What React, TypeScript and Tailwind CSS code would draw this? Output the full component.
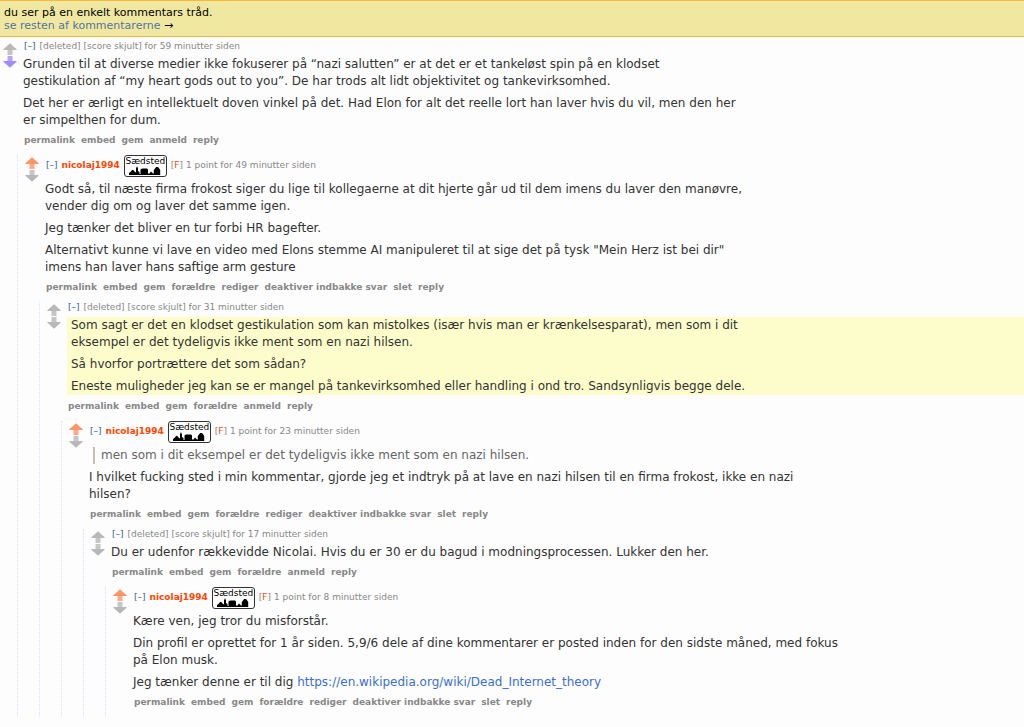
import type { ReactNode } from "react";

const OTHER_ACTIONS = ["permalink", "embed", "gem", "forældre", "anmeld", "reply"];
const OWN_ACTIONS = [
  "permalink",
  "embed",
  "gem",
  "forældre",
  "rediger",
  "deaktiver indbakke svar",
  "slet",
  "reply",
];

function Arrow(props: { label: string; className: string; down?: boolean }) {
  return (
    <button type="button" aria-label={props.label} className={props.className}>
      <svg
        viewBox="0 0 14 12"
        className={props.down ? "block h-3 w-3.5 rotate-180" : "block h-3 w-3.5"}
        fill="currentColor"
      >
        <path d="M7 0.2 L13.6 6.2 V7 H0.4 V6.2 Z" />
        <path d="M4.5 7 H9.5 V12 H4.5 Z" fillOpacity="0.8" />
      </svg>
    </button>
  );
}

function Stamp() {
  return (
    <span className="flex h-[22px] w-[43px] shrink-0 flex-col items-center justify-between overflow-hidden rounded-[3px] border border-[#333] bg-white pb-px text-[9px] leading-[10px] text-black">
      Sædsted
      <svg viewBox="0 0 32 9" className="block h-[9px] w-8 shrink-0" fill="#000">
        <path d="M0 9 V7 L2 5.5 L3.2 3.8 L5 4.5 L6 6.2 H7 V2.5 L8 0 L9 2.5 V5 L10.5 6 V8 H11.5 V3.5 L13 2.5 H18 L19 3.5 V7.5 H20.5 L22 5.5 L24 7.5 H24.8 V4 L26 2.5 L27.2 1 H29 L30.2 2.5 L31.2 4 V9 Z" />
      </svg>
    </span>
  );
}

function Comment(props: {
  author?: string;
  meta: string;
  actions: string[];
  vote?: "up" | "down";
  highlighted?: boolean;
  body: ReactNode;
  children?: ReactNode;
}) {
  return (
    <article>
      <div className="flex">
        <div className="flex w-[23px] shrink-0 flex-col pt-0.5 pl-[3px]">
          <Arrow
            label="stem op"
            className={props.vote === "up" ? "w-3.5 text-[#ff9466]" : "w-3.5 text-[#b8b8b8]"}
          />
          <Arrow
            label="stem ned"
            down
            className={
              props.vote === "down" ? "mt-px w-3.5 text-[#a08cff]" : "mt-px w-3.5 text-[#b8b8b8]"
            }
          />
        </div>
        <div className="min-w-0 flex-1">
          {props.author ? (
            <div className="mb-1 flex h-[22px] items-center gap-1 pl-px text-[9px] text-[#888]">
              <button type="button" className="text-[#369]">[–]</button>
              <a href="#" className="font-bold text-[#ff4500]">{props.author}</a>
              <Stamp />
              <span>
                [<a href="#" className="text-[#ff4500]">F</a>] {props.meta}
              </span>
            </div>
          ) : (
            <div className="mb-[3px] flex h-3 items-center gap-1 pl-px text-[9px] text-[#888]">
              <button type="button" className="text-[#369]">[–]</button>
              <span>[deleted] {props.meta}</span>
            </div>
          )}
          <div className={props.highlighted ? "bg-[#fdfdcc] pl-1" : ""}>
            <div className="flex max-w-[716px] flex-col gap-[5px] text-[12px] leading-[17px] text-[#333]">
              {props.body}
            </div>
          </div>
          <ul className="flex gap-1.5 pt-1 pb-2 pl-px text-[9px] leading-[14px] font-bold text-[#888]">
            {props.actions.map((action) => (
              <li key={action}>
                <a href="#">{action}</a>
              </li>
            ))}
          </ul>
        </div>
      </div>
      {props.children ? (
        <div className="ml-[17px] border-l border-dotted border-[#ddf] pl-1">{props.children}</div>
      ) : null}
    </article>
  );
}

export default function App() {
  return (
    <main className="min-h-screen bg-[#fdfdfd] font-['DejaVu_Sans',sans-serif]">
      <div className="mb-1 border-y border-[#fbb740] bg-[#f0e8a0] px-1 pt-[5px] pb-1 text-[11px] leading-[13px] text-black">
        <p>du ser på en enkelt kommentars tråd.</p>
        <p>
          <a href="#" className="text-[#5374a0]">se resten af kommentarerne</a> →
        </p>
      </div>
      <Comment
        meta="[score skjult] for 59 minutter siden"
        vote="down"
        actions={OTHER_ACTIONS.filter((action) => action !== "forældre")}
        body={
          <>
            <p>
              Grunden til at diverse medier ikke fokuserer på “nazi salutten” er at det er et
              tankeløst spin på en klodset gestikulation af “my heart gods out to you”. De har trods
              alt lidt objektivitet og tankevirksomhed.
            </p>
            <p>
              Det her er ærligt en intellektuelt doven vinkel på det. Had Elon for alt det reelle
              lort han laver hvis du vil, men den her er simpelthen for dum.
            </p>
          </>
        }
      >
        <Comment
          author="nicolaj1994"
          meta="1 point for 49 minutter siden"
          vote="up"
          actions={OWN_ACTIONS}
          body={
            <>
              <p>
                Godt så, til næste firma frokost siger du lige til kollegaerne at dit hjerte går ud
                til dem imens du laver den manøvre, vender dig om og laver det samme igen.
              </p>
              <p>Jeg tænker det bliver en tur forbi HR bagefter.</p>
              <p>
                Alternativt kunne vi lave en video med Elons stemme AI manipuleret til at sige det
                på tysk "Mein Herz ist bei dir" imens han laver hans saftige arm gesture
              </p>
            </>
          }
        >
          <Comment
            meta="[score skjult] for 31 minutter siden"
            highlighted
            actions={OTHER_ACTIONS}
            body={
              <>
                <p>
                  Som sagt er det en klodset gestikulation som kan mistolkes (især hvis man er
                  krænkelsesparat), men som i dit eksempel er det tydeligvis ikke ment som en nazi
                  hilsen.
                </p>
                <p>Så hvorfor portrættere det som sådan?</p>
                <p>
                  Eneste muligheder jeg kan se er mangel på tankevirksomhed eller handling i ond
                  tro. Sandsynligvis begge dele.
                </p>
              </>
            }
          >
            <Comment
              author="nicolaj1994"
              meta="1 point for 23 minutter siden"
              vote="up"
              actions={OWN_ACTIONS}
              body={
                <>
                  <blockquote className="ml-1 border-l-2 border-[#c5c1ad] pl-1.5 text-[#666]">
                    men som i dit eksempel er det tydeligvis ikke ment som en nazi hilsen.
                  </blockquote>
                  <p>
                    I hvilket fucking sted i min kommentar, gjorde jeg et indtryk på at lave en nazi
                    hilsen til en firma frokost, ikke en nazi hilsen?
                  </p>
                </>
              }
            >
              <Comment
                meta="[score skjult] for 17 minutter siden"
                actions={OTHER_ACTIONS}
                body={
                  <p>
                    Du er udenfor rækkevidde Nicolai. Hvis du er 30 er du bagud i
                    modningsprocessen. Lukker den her.
                  </p>
                }
              >
                <Comment
                  author="nicolaj1994"
                  meta="1 point for 8 minutter siden"
                  vote="up"
                  actions={OWN_ACTIONS}
                  body={
                    <>
                      <p>Kære ven, jeg tror du misforstår.</p>
                      <p>
                        Din profil er oprettet for 1 år siden. 5,9/6 dele af dine kommentarer er
                        posted inden for den sidste måned, med fokus på Elon musk.
                      </p>
                      <p>
                        Jeg tænker denne er til dig{" "}
                        <a
                          href="https://en.wikipedia.org/wiki/Dead_Internet_theory"
                          className="text-[#3a6fd0]"
                        >
                          https://en.wikipedia.org/wiki/Dead_Internet_theory
                        </a>
                      </p>
                    </>
                  }
                />
              </Comment>
            </Comment>
          </Comment>
        </Comment>
      </Comment>
    </main>
  );
}
